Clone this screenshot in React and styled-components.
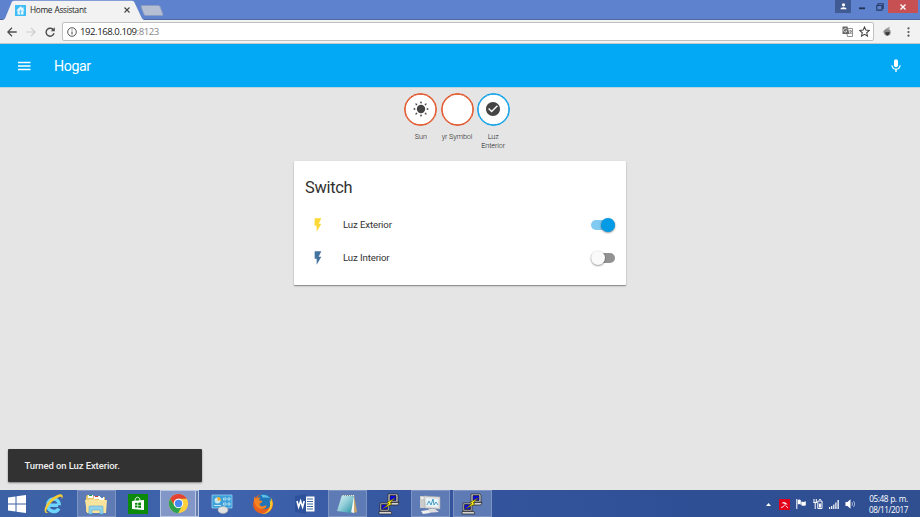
import React from "react";
import styled, { createGlobalStyle } from "styled-components";

const GlobalStyle = createGlobalStyle`
  * { box-sizing: border-box; }
  body { margin: 0; overflow: hidden; font-family: Roboto, sans-serif; }
  svg { display: block; flex: none; }
`;

const Desktop = styled.div`
  width: 920px;
  height: 517px;
  display: flex;
  flex-direction: column;
  position: relative;
  background: #e5e5e5;
`;

/* Browser chrome */
const TitleBar = styled.div`
  height: 20px;
  flex: none;
  display: flex;
  align-items: flex-start;
  background: #5e82cd;
  padding-left: 3px;
  box-shadow: inset 0 -1px #54699b;
`;
const Tab = styled.div`
  width: 141px;
  height: 20px;
  display: flex;
  align-items: center;
  padding: 0 14px 0 12px;
  background: #f2f2f2;
  clip-path: polygon(0 100%, 2px 93%, 9px 8%, 11px 4%, 129px 4%, 131px 8%, 139px 93%, 141px 100%);
`;
const TabTitle = styled.span`
  flex: 1;
  margin-left: 4px;
  font: 8.3px/20px "Open Sans", sans-serif;
  letter-spacing: -0.34px;
  word-spacing: 0.6px;
  color: #222;
  white-space: nowrap;
`;
const NewTab = styled.div`
  width: 20px;
  height: 11px;
  margin: 5px 0 0 -2px;
  background: #b5bfd3;
  border: 1px solid #8c9dc2;
  border-radius: 2px;
  transform: skewX(20deg);
`;
const WindowControls = styled.div`
  display: flex;
  margin-left: auto;
  margin-right: 2px;
`;
const WindowButton = styled.div`
  width: ${(p) => p.$w}px;
  height: 13px;
  display: grid;
  place-items: center;
  background: ${(p) => p.$bg || "transparent"};
`;
const Toolbar = styled.div`
  height: 24px;
  flex: none;
  display: flex;
  align-items: center;
  background: #f2f2f2;
  border-bottom: 1px solid #c4c8ca;
  padding: 0 1px 0 2px;
`;
const ToolSlot = styled.div`
  width: ${(p) => p.$w}px;
  display: grid;
  place-items: center;
`;
const Omnibox = styled.div`
  flex: 1;
  height: 19px;
  margin-right: 3px;
  display: flex;
  align-items: center;
  padding: 0 0 0 4px;
  background: #fff;
  border: 1px solid #c0c0c0;
  border-radius: 2px;
`;
const Url = styled.span`
  flex: 1;
  margin-left: 3px;
  font: 9.6px/17px "Open Sans", sans-serif;
  letter-spacing: -0.45px;
  color: #222;
`;
const Port = styled.span`
  color: #888;
`;

/* Application */
const AppHeader = styled.header`
  height: 43px;
  flex: none;
  display: flex;
  align-items: center;
  padding: 0 16px;
  background: #03a9f4;
  color: #fff;
`;
const AppTitle = styled.h1`
  flex: 1;
  margin: 0 0 0 22px;
  font: 400 14.2px/20px Roboto, sans-serif;
  letter-spacing: -0.4px;
`;
const Main = styled.main`
  flex: 1;
  display: flex;
  flex-direction: column;
  align-items: center;
  background: #e5e5e5;
  padding-top: 5.5px;
  box-shadow: inset 0 1px #b9d3e0;
`;
const Badges = styled.div`
  display: flex;
  height: 68.5px;
  margin-right: 6px;
`;
const Badge = styled.div`
  width: 36.2px;
  display: flex;
  flex-direction: column;
  align-items: center;
`;
const BadgeCircle = styled.div`
  width: 33px;
  height: 33px;
  border-radius: 50%;
  background: #fff;
  border: 1px solid ${(p) => p.$color};
  box-shadow: inset 0 0 0 0.7px ${(p) => p.$color};
  display: grid;
  place-items: center;
`;
const BadgeLabel = styled.div`
  margin-top: 7.5px;
  width: 34px;
  text-align: center;
  font: 300 7.3px/8.6px Roboto, sans-serif;
  letter-spacing: -0.13px;
  color: #222;
`;
const Card = styled.section`
  width: 332px;
  height: 124px;
  background: #fff;
  border-radius: 1px;
  box-shadow: 0 1px 1.5px rgba(0, 0, 0, 0.45);
  padding: 16px 11.5px 0 11px;
`;
const CardTitle = styled.h2`
  margin: 0 0 15.5px;
  font: 400 16.4px/22px Roboto, sans-serif;
  color: #303030;
  letter-spacing: -0.3px;
`;
const EntityRow = styled.div`
  height: 21px;
  margin-bottom: 11.5px;
  display: flex;
  align-items: center;
  padding-left: 5px;
`;
const EntityName = styled.span`
  flex: 1;
  margin-left: 17px;
  font: 400 9.7px/16px Roboto, sans-serif;
  letter-spacing: -0.15px;
  color: #333;
`;
const Track = styled.div`
  width: 24px;
  height: 10px;
  border-radius: 5px;
  background: ${(p) => (p.$on ? "#81caf1" : "#929292")};
  display: flex;
  align-items: center;
  justify-content: ${(p) => (p.$on ? "flex-end" : "flex-start")};
`;
const Knob = styled.div`
  width: 14px;
  height: 14px;
  flex: none;
  border-radius: 50%;
  background: ${(p) => (p.$on ? "#039be5" : "#fafafa")};
  box-shadow: 0 0.7px 2px rgba(0, 0, 0, 0.5);
`;
const Toast = styled.div`
  position: absolute;
  left: 8px;
  top: 449px;
  width: 194px;
  height: 33px;
  padding-left: 16.5px;
  background: #323232;
  border-radius: 1px;
  box-shadow: 0 1px 2px rgba(0, 0, 0, 0.45);
  font: 500 9.5px/33px Roboto, sans-serif;
  letter-spacing: -0.1px;
  color: #eee;
`;

/* Taskbar */
const Taskbar = styled.footer`
  height: 27px;
  flex: none;
  display: flex;
  align-items: stretch;
  background: linear-gradient(90deg, #3c61a4, #3f63ad 25%, #35569f 45%, #2f4f95 75%, #304f91);
`;
const StartButton = styled.div`
  width: 33.6px;
  display: grid;
  place-items: center;
`;
const TaskSlot = styled.div`
  width: 41.8px;
  padding: 0 1.4px;
  display: flex;
`;
const TaskTile = styled.div`
  flex: 1;
  display: grid;
  place-items: center;
  padding-right: ${(p) => (p.$state === "active" ? 3 : 0)}px;
  background: ${(p) => (p.$state === "active" ? "#8296c7" : p.$state === "open" ? "#5f7bb5" : "transparent")};
  border: ${(p) => (p.$state ? "1px solid" : "0")};
  border-color: ${(p) => (p.$state === "active" ? "#bac7e2" : "#7e95c3")};
  box-shadow: ${(p) => (p.$state === "active" ? "inset -2px 0 #657cae, inset -3px 0 #bbc8e2" : "none")};
`;
const Tray = styled.div`
  margin-left: auto;
  display: flex;
  align-items: center;
  padding: 1px 2px 0 0;
`;
const TraySlot = styled.div`
  width: 16.5px;
  display: grid;
  place-items: center;
`;
const Clock = styled.div`
  width: 59px;
  font: 8.2px/11px "Open Sans", sans-serif;
  letter-spacing: -0.43px;
  word-spacing: 0.6px;
  color: #fff;
  text-align: center;
  white-space: nowrap;
`;

const Putty = () => (
  <svg width="22" height="22" viewBox="0 0 22 22">
    <g stroke="#222" strokeWidth=".7">
      <path d="M10 1h9l1 1v7H10z" fill="#c9c9c9" />
      <path d="M12 2.500h6v5h-6z" fill="#0909d9" />
      <path d="M9 9.500h12l-1 2.500H9z" fill="#d4d4d4" />
      <path d="M2 10h9v8H2z" fill="#c9c9c9" />
      <path d="M3.500 11.500h6v5h-6z" fill="#0909d9" />
      <path d="M1 18.500h12l1 2.500H1z" fill="#d4d4d4" />
      <path d="M17 5l-8 4.500 2 1-6 5 9-4.500-2-1z" fill="#fff313" stroke="#675e00" />
    </g>
  </svg>
);

const ICONS = {
  ie: (
    <svg width="22" height="22" viewBox="0 0 22 22">
      <path d="M6.500 12.200h8.500M15.800 15.500c-2.400 5-11 3.500-11-3.500 0-8 11.500-8 11.500.2" fill="none" stroke="#6ed6fa" strokeWidth="3.400" />
      <path d="M3 20c-4-2 1-11 7-15.500 4-3 8.500-4.500 9.500-2 .5 1.200 0 2.500-.6 3.700.1-2.300-1-2.800-3-2C9.500 6.500 3 15 3.300 18.200c.1.800.7 1.400 2.700.8-1 .8-2 1.300-3 1z" fill="#f8cd32" />
    </svg>
  ),
  explorer: (
    <svg width="22" height="22" viewBox="0 0 22 22">
      <path d="M1 4l1-2h6l1 2h11v15H1z" fill="#e8c76b" />
      <path d="M3 2h5v3H3z" fill="#fff" /><path d="M4 2h3v1H4z" fill="#16a34a" />
      <path d="M9 3h6v3H9z" fill="#fff" /><path d="M10 3h3v1h-3z" fill="#dc3431" />
      <path d="M14 4h5v3h-5z" fill="#fff" /><path d="M16 4h2v1h-2z" fill="#4285d7" />
      <path d="M0 7l9-1 2 1h11l-1 13H2z" fill="#f8e49d" />
      <path d="M4 21v-7q0-1 1-1h12q1 0 1 1v7h-3v-4H7v4z" fill="#91d3ed" stroke="#5da9cf" strokeWidth=".6" />
    </svg>
  ),
  store: (
    <svg width="20" height="20" viewBox="0 0 20 20">
      <path d="M0 0h20v20H0z" fill="#0b8a0b" />
      <path d="M4 7l12-1v10l-12-1z" fill="#fff" />
      <path d="M7 7c0-5 5-5 5 0" fill="none" stroke="#fff" strokeWidth="1" />
      <path d="M7 9l2.500-.2v2H7zM10.200 8.700L13 8.500v2.400h-2.800zM7 11.600h2.500v2L7 13.400zM10.200 11.600H13V14l-2.800-.3z" fill="#0b8a0b" />
    </svg>
  ),
  chrome: (
    <svg width="21" height="21" viewBox="0 0 24 24">
      <circle cx="12" cy="12" r="11" fill="#ffd03d" />
      <path d="M2.500 6.500A11 11 0 0 1 21.500 6.500H12A5.500 5.500 0 0 0 7.200 14.700z" fill="#e24335" />
      <path d="M2.500 6.500a11 11 0 0 0 9 16.500l4.800-8.300a5.500 5.500 0 0 1-9.100 0z" fill="#2ba24c" />
      <circle cx="12" cy="12" r="5.400" fill="#fff" /><circle cx="12" cy="12" r="4.200" fill="#4688f1" />
    </svg>
  ),
  control: (
    <svg width="22" height="20" viewBox="0 0 22 20">
      <path d="M1 1h20v13H1z" fill="#3ca0d9" stroke="#93d4f2" strokeWidth=".8" />
      <circle cx="6.500" cy="6.500" r="3" fill="#c5e6ee" /><path d="M6.500 6.500V3a3.500 3.500 0 0 1 3.500 3.500z" fill="#ffad29" />
      <path d="M3 11.500h7" stroke="#c5e7f7" />
      <path d="M12.500 4h2.500v2h-2.500zM17 4h2v2h-2zM12.500 9h2.500v2h-2.500zM17 9h2v2h-2z" fill="none" stroke="#c5e7f7" strokeWidth=".8" />
      <ellipse cx="12" cy="16" rx="5" ry="3.500" fill="#e1e1e1" stroke="#aaa" strokeWidth=".5" />
    </svg>
  ),
  firefox: (
    <svg width="22" height="22" viewBox="0 0 22 22">
      <circle cx="11" cy="11" r="10" fill="#e8601c" />
      <circle cx="12" cy="8.500" r="7.800" fill="#2074b8" />
      <path d="M9 2q5-1.500 9 3-4-1-7-.3z" fill="#62bfe9" />
      <path d="M2.500 3q0 2 1.500 2.700Q6 4 8.500 4.800 7 6 7.200 7.200L10.500 8q0 1.800-3 2.800.2 2.700 3.300 2.700 2-1.600 4-.8-1.500 3.300-5 3.300Q6 16 4 13 1 8 2.500 3z" fill="#f58220" />
      <path d="M18.800 4.500q3.500 6 .5 11.200-3.500 6-10.500 5.300 6-.5 8.200-5 2-4 .5-8.500l1.300 1z" fill="#ffc72c" />
    </svg>
  ),
  word: (
    <svg width="20" height="20" viewBox="0 0 20 20">
      <path d="M11 2.500h8.500v15H11z" fill="#fff" />
      <path d="M12 5h6M12 7.500h6M12 10h6M12 12.500h6M12 15h6" stroke="#2b579a" strokeWidth=".9" />
      <path d="M0 2l11-2v20L0 18z" fill="#2d529b" />
      <path d="M2 7l1.600 6 2-6 2 6L9.200 7" fill="none" stroke="#fff" strokeWidth="1.600" />
    </svg>
  ),
  notepad: (
    <svg width="22" height="22" viewBox="0 0 22 22">
      <defs><linearGradient id="page" x2="1" y2="1"><stop stopColor="#e1f7f7" /><stop offset=".5" stopColor="#8ccbd7" /><stop offset="1" stopColor="#248f9e" /></linearGradient></defs>
      <path d="M18 2l3 17-3 1z" fill="#c9a76b" /><path d="M6 2h12v18l-4-1z" fill="#f7f7f7" />
      <path d="M6 2l12 1-3 17-14-2z" fill="url(#page)" /><path d="M6 2l12 1" stroke="#777" strokeDasharray="1 1" />
    </svg>
  ),
  monitor: (
    <svg width="23" height="22" viewBox="0 0 23 22">
      <path d="M1 3h6v12H1z" fill="#cbcbcb" /><path d="M2 4h3v2H2z" fill="#eee" />
      <path d="M5 3l16 1v12L6 15z" fill="#dfdfdf" stroke="#aaa" strokeWidth=".6" />
      <path d="M7 5l12 1v8L7.500 13z" fill="#e7f5fa" />
      <path d="M8 12l2-4 2 4 2-6 1 6 2-3 2 3" fill="none" stroke="#2389bc" strokeWidth=".8" />
      <path d="M10 16h6l4 3-13 1z" fill="#ddd" /><path d="M2 18l7-1 2 3-7 1z" fill="#eee" />
    </svg>
  ),
  putty: <Putty />,
};
const TASKS = [
  ["ie"], ["explorer", "open"], ["store"], ["chrome", "active"], ["control"], ["firefox"],
  ["word"], ["notepad", "open"], ["putty"], ["monitor", "open"], ["putty", "open"],
];

const SunIcon = () => (
  <svg width="16" height="16" viewBox="0 0 16 16" fill="#444">
    <circle cx="8" cy="8" r="4.200" />
    <path d="M8 0l1.200 2.200H6.800zM8 16l1.200-2.200H6.800zM0 8l2.200-1.200v2.400zM16 8l-2.200-1.200v2.400zM2.300 2.300l2.400.7-1.700 1.700zM13.700 2.300l-.7 2.400-1.700-1.700zM2.300 13.700l.7-2.400 1.700 1.700zM13.700 13.700l-2.400-.7 1.700-1.700z" />
  </svg>
);
const CheckIcon = () => (
  <svg width="14" height="14" viewBox="2 2 20 20">
    <path fill="#444" d="M12 2C6.500 2 2 6.500 2 12s4.500 10 10 10 10-4.500 10-10S17.500 2 12 2zm-2 15l-5-5 1.400-1.400 3.600 3.600 7.600-7.600L19 8z" />
  </svg>
);

const BADGES = [
  { label: "Sun", color: "#df4c1e", icon: <SunIcon /> },
  { label: "yr Symbol", color: "#df4c1e" },
  { label: "Luz Enterior", color: "#039be5", icon: <CheckIcon /> },
];
const ENTITIES = [
  { name: "Luz Exterior", on: true },
  { name: "Luz Interior", on: false },
];

function BrowserChrome() {
  return (
    <>
      <TitleBar>
        <Tab>
          <svg width="11" height="11" viewBox="0 0 11 11">
            <path d="M0 0h11v11H0z" fill="#41bdf5" />
            <path d="M5.500 1.300L1.300 5.500h1.200v4h6v-4h1.200L8.500 4.300V2.200h-1v1z" fill="#e8f8ff" />
            <path d="M5.500 9.500V4.500M5.500 8L3.700 6.300M5.500 7.200l1.700-1.700" stroke="#41bdf5" strokeWidth=".7" />
          </svg>
          <TabTitle>Home Assistant</TabTitle>
          <svg width="6" height="6" viewBox="0 0 6 6"><path d="M.5.5l5 5M5.500.5l-5 5" stroke="#444" strokeWidth="1.100" /></svg>
        </Tab>
        <NewTab />
        <WindowControls>
          <WindowButton $w={16} $bg="#405b94">
            <svg width="7" height="7" viewBox="0 0 7 7" fill="#fff"><circle cx="3.500" cy="1.800" r="1.600" /><path d="M.5 6.200q0-2 3-2t3 2z" /></svg>
          </WindowButton>
          <WindowButton $w={21}>
            <svg width="6" height="7" viewBox="0 0 6 7"><path d="M0 5.300h6" stroke="#233354" strokeWidth="1.800" /></svg>
          </WindowButton>
          <WindowButton $w={16}>
            <svg width="8" height="8" viewBox="0 0 8 8" fill="none" stroke="#263a65" strokeWidth="1.100"><path d="M2 2V.8h5.200v4.700H6M.8 2.500H6v4.600H.8z" /></svg>
          </WindowButton>
          <WindowButton $w={30} $bg="#c75052">
            <svg width="6" height="6" viewBox="0 0 6 6"><path d="M.5.5l5 5M5.500.5l-5 5" stroke="#fff" strokeWidth="1.300" /></svg>
          </WindowButton>
        </WindowControls>
      </TitleBar>
      <Toolbar>
        <ToolSlot $w={20}>
          <svg width="10" height="10" viewBox="0 0 10 10" fill="none" stroke="#505050" strokeWidth="1.300"><path d="M9.700 5H1M5 .8L.8 5 5 9.200" /></svg>
        </ToolSlot>
        <ToolSlot $w={18}>
          <svg width="10" height="10" viewBox="0 0 10 10" fill="none" stroke="#ccc" strokeWidth="1.200"><path d="M.3 5H9M5 .8L9.200 5 5 9.200" /></svg>
        </ToolSlot>
        <ToolSlot $w={19}>
          <svg width="10" height="10" viewBox="0 0 10 10"><path d="M8.500 3A4 4 0 1 0 9 6.300" fill="none" stroke="#4d4d4d" strokeWidth="1.400" /><path d="M9.800.3v4H5.800z" fill="#4d4d4d" /></svg>
        </ToolSlot>
        <ToolSlot $w={3} />
        <Omnibox>
          <svg width="10" height="10" viewBox="0 0 10 10" fill="none" stroke="#555"><circle cx="5" cy="5" r="4.300" /><path d="M5 4.400v3M5 2.500v1.100" strokeWidth="1.100" /></svg>
          <Url>192.168.0.109<Port>:8123</Port></Url>
          <ToolSlot $w={18}>
            <svg width="11" height="11" viewBox="0 0 11 11">
              <path d="M4 2.500h6.500v8H5.500z" fill="#fff" stroke="#777" strokeWidth=".8" />
              <path d="M.5.500h5l2 7.500h-7z" fill="#666" />
              <path d="M5 3.500a1.800 1.800 0 1 0 0 1.500H3.500" fill="none" stroke="#eee" strokeWidth=".8" />
              <path d="M7 5h3M8.500 4v1M9.500 5q-.5 2-2 3M8 6l1.700 2" fill="none" stroke="#666" strokeWidth=".7" />
            </svg>
          </ToolSlot>
          <ToolSlot $w={17}>
            <svg width="11" height="11" viewBox="0 0 24 24" fill="none" stroke="#444" strokeWidth="2.300"><path d="M12 2l3 7 7.500.7-5.700 5 1.700 7.300L12 18l-6.500 4 1.700-7.300-5.700-5L9 9z" /></svg>
          </ToolSlot>
        </Omnibox>
        <ToolSlot $w={20}>
          <svg width="10" height="11" viewBox="0 0 9 10"><path d="M.5 6Q2 2.500 7.500.5q-2 3 .5 4l-2 1.500z" fill="#a5a5a5" /><circle cx="4.800" cy="6" r="3" fill="#8a8a8a" /><path d="M2.500 6l4.500-.5-1 2.500-1.500.7z" fill="#333" /></svg>
        </ToolSlot>
        <ToolSlot $w={22}>
          <svg width="3" height="10" viewBox="0 0 3 10" fill="#555"><circle cx="1.500" cy="1.300" r="1.100" /><circle cx="1.500" cy="5" r="1.100" /><circle cx="1.500" cy="8.700" r="1.100" /></svg>
        </ToolSlot>
      </Toolbar>
    </>
  );
}

function SystemTray() {
  return (
    <Tray>
      <TraySlot><svg width="5" height="3" viewBox="0 0 5 3"><path d="M0 3L2.500 0 5 3z" fill="#fff" /></svg></TraySlot>
      <TraySlot>
        <svg width="11" height="11" viewBox="0 0 11 11"><path d="M0 0h11v11H0z" fill="#e2001a" /><path d="M2.500 4.500Q5 .8 8.800 5.800q-1.500-1-2.300-.3Q4.500 3.800 2.500 4.500z" fill="#fff" /><path d="M6 5.500Q4 9 2 8.500M6.500 6.500l2.500 2.500" stroke="#fff" strokeWidth=".8" fill="none" /></svg>
      </TraySlot>
      <TraySlot>
        <svg width="10" height="10" viewBox="0 0 10 10" fill="#fff"><path d="M.3 0h1v10h-1zM1.800 1q2-1 3 .3v4.500q-1.500-1.200-3-.3zM5.300 2.500q2 1 4.500-.2v4q-2 1-4.500 0z" /></svg>
      </TraySlot>
      <TraySlot>
        <svg width="10" height="10" viewBox="0 0 10 10" fill="none" stroke="#fff"><path d="M4.800 2h4.200v7.500H4.800z" /><path d="M6 .7h2M1 0v3M3.300 0v3M2.200 4v6M.3 3.500h3.700" /><path d="M6.900 4.500V8.500" strokeWidth="2" /></svg>
      </TraySlot>
      <TraySlot>
        <svg width="10" height="9" viewBox="0 0 10 9" fill="#fff"><path d="M0 7h1.200v2H0zM2.100 6h1.200v3H2.100zM4.200 4.500h1.200V9H4.200zM6.300 2.500h1.200V9H6.300zM8.500 0h1.300v9H8.500z" /></svg>
      </TraySlot>
      <TraySlot>
        <svg width="11" height="10" viewBox="0 0 11 10"><path d="M.5 3h2L5.500.3v9.400L2.500 7h-2z" fill="#fff" /><path d="M7 3.300q1 1.700 0 3.400M8.700 2q2 3 0 6" fill="none" stroke="#d6deee" strokeWidth=".7" /></svg>
      </TraySlot>
      <Clock>05:48 p. m.<br />08/11/2017</Clock>
    </Tray>
  );
}

export default function App() {
  return (
    <Desktop>
      <GlobalStyle />
      <BrowserChrome />
      <AppHeader>
        <svg width="16" height="16" viewBox="0 0 16 16"><path d="M2 4.500h12.500M2 8h12.500M2 11.500h12.500" stroke="#fff" strokeWidth="1.300" /></svg>
        <AppTitle>Hogar</AppTitle>
        <svg width="16" height="16" viewBox="0 0 24 24" fill="#fff">
          <path d="M12 14c1.700 0 3-1.300 3-3V5c0-1.700-1.300-3-3-3S9 3.300 9 5v6c0 1.700 1.300 3 3 3zm5.300-3c0 3-2.500 5.100-5.300 5.100S6.700 14 6.700 11H5c0 3.400 2.700 6.200 6 6.700V21h2v-3.300c3.300-.5 6-3.300 6-6.700z" />
        </svg>
      </AppHeader>
      <Main>
        <Badges>
          {BADGES.map((b) => (
            <Badge key={b.label}>
              <BadgeCircle $color={b.color}>{b.icon}</BadgeCircle>
              <BadgeLabel>{b.label}</BadgeLabel>
            </Badge>
          ))}
        </Badges>
        <Card>
          <CardTitle>Switch</CardTitle>
          {ENTITIES.map((e) => (
            <EntityRow key={e.name}>
              <svg width="16" height="16" viewBox="0 0 24 24"><path d="M7 2v11h3v9l7-12h-4l4-8z" fill={e.on ? "#fdd835" : "#44739e"} /></svg>
              <EntityName>{e.name}</EntityName>
              <Track $on={e.on}><Knob $on={e.on} /></Track>
            </EntityRow>
          ))}
        </Card>
      </Main>
      <Taskbar>
        <StartButton>
          <svg width="18" height="18" viewBox="0 0 18 18" fill="#fff"><path d="M0 2.500L7.500 1.500v7H0zM8.500 1.300L18 0v8.500H8.500zM0 9.500h7.500v7L0 15.500zM8.500 9.500H18V18l-9.500-1.300z" /></svg>
        </StartButton>
        {TASKS.map(([name, state], i) => (
          <TaskSlot key={i}><TaskTile $state={state}>{ICONS[name]}</TaskTile></TaskSlot>
        ))}
        <SystemTray />
      </Taskbar>
      <Toast>Turned on Luz Exterior.</Toast>
    </Desktop>
  );
}
